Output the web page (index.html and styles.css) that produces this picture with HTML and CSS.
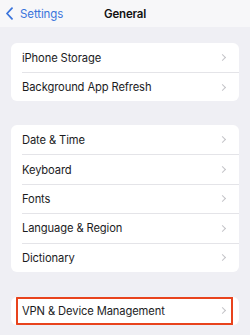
FILE: index.html
```html
<!DOCTYPE html>
<html>
<head>
<meta charset="utf-8">
<link rel="stylesheet" href="styles.css">
</head>
<body>
<header class="nav">
  <div class="back">
    <svg class="back-icon" width="9" height="13" viewBox="0 0 9 13"><path d="M7 1.2 L2 6.5 L7 11.8" fill="none" stroke="#3a74dc" stroke-width="1.8" stroke-linecap="round" stroke-linejoin="round"/></svg>
    <span>Settings</span>
  </div>
  <div class="title">General</div>
</header>
<main class="content">
  <section class="card">
    <div class="row"><span>iPhone Storage</span><i class="chev"></i></div>
    <div class="row"><span>Background App Refresh</span><i class="chev"></i></div>
  </section>
  <section class="card card-2">
    <div class="row"><span>Date &amp; Time</span><i class="chev"></i></div>
    <div class="row"><span>Keyboard</span><i class="chev"></i></div>
    <div class="row"><span>Fonts</span><i class="chev"></i></div>
    <div class="row"><span>Language &amp; Region</span><i class="chev"></i></div>
    <div class="row"><span>Dictionary</span><i class="chev"></i></div>
  </section>
  <section class="card card-3">
    <div class="row highlight"><span>VPN &amp; Device Management</span><i class="chev"></i></div>
  </section>
</main>
</body>
</html>
```

FILE: styles.css
```css
* { box-sizing: border-box; }
html, body { margin: 0; padding: 0; }
body {
  background: #efeff4;
  font-family: Inter, Roboto, "Liberation Sans", sans-serif;
  color: #1c1c1e;
  width: 250px;
  height: 335px;
  overflow: hidden;
}
.nav {
  position: relative;
  height: 27px;
  background: #f7f7f9;
  display: flex;
  align-items: center;
  justify-content: center;
}
.back {
  position: absolute;
  left: 5px;
  top: 0;
  height: 27px;
  display: flex;
  align-items: center;
  gap: 6px;
  color: #3a74dc;
  font-size: 11.5px;
  letter-spacing: -0.1px;
}
.title {
  font-size: 11.5px;
  font-weight: 600;
  letter-spacing: -0.2px;
  color: #111;
}
.content {
  padding: 16px 11px 0;
  display: flex;
  flex-direction: column;
}
.card {
  background: #fff;
  border-radius: 6px;
  overflow: hidden;
}
.card-2 { margin-top: 24px; }
.card-3 { margin-top: 25px; padding: 0 6px 0 5px; }
.row {
  height: 29px;
  display: flex;
  align-items: center;
  justify-content: space-between;
  margin-left: 11px;
  padding-right: 12px;
  font-size: 11.2px;
  letter-spacing: -0.12px;
  border-top: 1px solid #e4e4e8;
}
.card-2 .row { height: 29.4px; }
.row:first-child { border-top: none; }
.chev {
  width: 5px;
  height: 5px;
  border-right: 1.3px solid #c4c4c8;
  border-top: 1.3px solid #c4c4c8;
  transform: rotate(45deg);
  margin-right: 2px;
}
.card-3 .highlight {
  margin-left: 0;
  padding-left: 4px;
  padding-right: 4px;
  height: 28px;
  border: 2px solid #e8431d;
}
```
